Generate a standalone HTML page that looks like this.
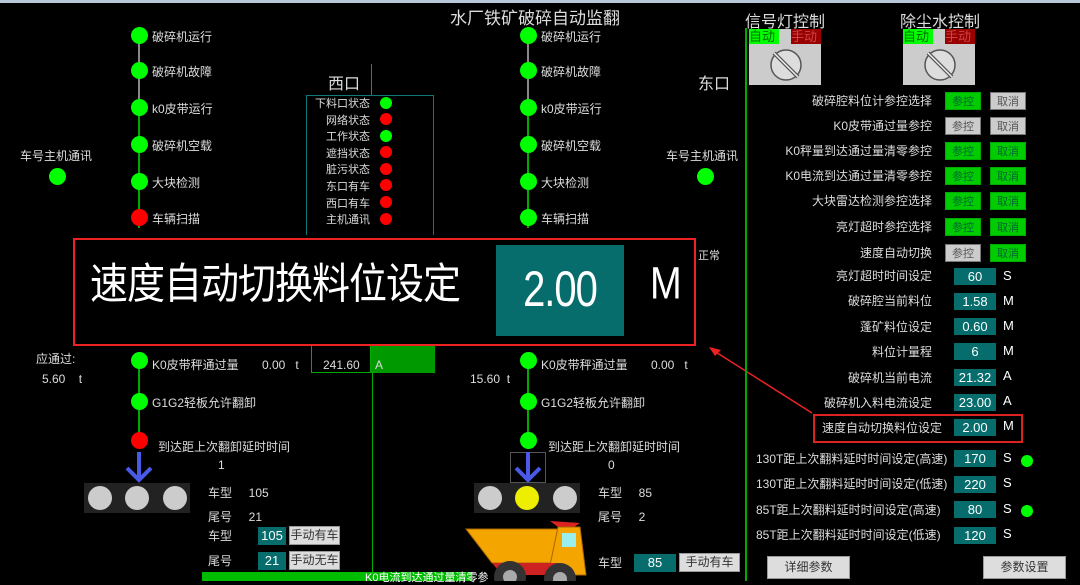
<!DOCTYPE html>
<html><head><meta charset="utf-8"><style>
*{margin:0;padding:0;box-sizing:border-box}
body{width:1080px;height:581px;background:#000;position:relative;overflow:hidden;font-family:"Liberation Sans","Noto Sans CJK SC",sans-serif;color:#ddd}
.a{position:absolute;white-space:nowrap}
.t{font-size:12px;line-height:14px;color:#ddd}
.c{position:absolute;width:17px;height:17px;border-radius:50%;background:#0f0}
.r{background:#f00}
.d{position:absolute;width:12px;height:12px;border-radius:50%}
.btn{position:absolute;width:36px;height:18px;font-size:11px;line-height:18px;text-align:center;border:1px solid #777;color:#333}
.g{background:#0c0;color:#063;border-color:#0a0}
.gy{background:#ccc;color:#555}
.lb{position:absolute;right:148px;font-size:12px;line-height:14px;color:#ddd;text-align:right}
.v{position:absolute;background:#066c6c;color:#fff;font-size:13px;text-align:center;line-height:17px;height:17px}
.u{position:absolute;font-size:13px;color:#fff}
.wb{position:absolute;background:#ddd;color:#333;font-size:12px;text-align:center;border:1px solid #999}
</style></head><body>
<div class="a" style="left:0;top:0;width:1080px;height:3px;background:#b8c8d8"></div>
<div class="a" style="left:450px;top:4px;font-size:17px;color:#ddd">水厂铁矿破碎自动监翻</div>

<!-- left chain -->
<div class="a" style="left:138px;top:36px;width:2px;height:72px;background:#888"></div>
<div class="a" style="left:138px;top:108px;width:2px;height:120px;background:#0a0"></div>
<div class="c" style="left:131px;top:27px"></div><div class="a t" style="left:152px;top:30px">破碎机运行</div>
<div class="c" style="left:131px;top:62px"></div><div class="a t" style="left:152px;top:65px">破碎机故障</div>
<div class="c" style="left:131px;top:99px"></div><div class="a t" style="left:152px;top:102px">k0皮带运行</div>
<div class="c" style="left:131px;top:136px"></div><div class="a t" style="left:152px;top:139px">破碎机空载</div>
<div class="c" style="left:131px;top:173px"></div><div class="a t" style="left:152px;top:176px">大块检测</div>
<div class="c r" style="left:131px;top:209px"></div><div class="a t" style="left:152px;top:212px">车辆扫描</div>
<div class="a t" style="left:20px;top:149px">车号主机通讯</div>
<div class="c" style="left:49px;top:168px"></div>

<!-- 西口 -->
<div class="a" style="left:328px;top:70px;font-size:16px;color:#ddd">西口</div>
<div class="a" style="left:371px;top:64px;width:1px;height:32px;background:#0a0"></div>
<div class="a" style="left:306px;top:95px;width:128px;height:140px;border:1px solid #177;border-bottom:none"></div>
<div class="a" style="left:300px;top:96px;width:70px;font-size:11px;line-height:16.6px;text-align:right;color:#ddd">下料口状态<br>网络状态<br>工作状态<br>遮挡状态<br>脏污状态<br>东口有车<br>西口有车<br>主机通讯</div>
<div class="d" style="left:380px;top:97px;background:#0f0"></div>
<div class="d" style="left:380px;top:113px;background:#f00"></div>
<div class="d" style="left:380px;top:130px;background:#0f0"></div>
<div class="d" style="left:380px;top:146px;background:#f00"></div>
<div class="d" style="left:380px;top:163px;background:#f00"></div>
<div class="d" style="left:380px;top:179px;background:#f00"></div>
<div class="d" style="left:380px;top:196px;background:#f00"></div>
<div class="d" style="left:380px;top:213px;background:#f00"></div>

<!-- center chain -->
<div class="a" style="left:527px;top:36px;width:2px;height:72px;background:#888"></div>
<div class="a" style="left:527px;top:108px;width:2px;height:120px;background:#0a0"></div>
<div class="c" style="left:520px;top:27px"></div><div class="a t" style="left:541px;top:30px">破碎机运行</div>
<div class="c" style="left:520px;top:62px"></div><div class="a t" style="left:541px;top:65px">破碎机故障</div>
<div class="c" style="left:520px;top:99px"></div><div class="a t" style="left:541px;top:102px">k0皮带运行</div>
<div class="c" style="left:520px;top:136px"></div><div class="a t" style="left:541px;top:139px">破碎机空载</div>
<div class="c" style="left:520px;top:173px"></div><div class="a t" style="left:541px;top:176px">大块检测</div>
<div class="c" style="left:520px;top:209px"></div><div class="a t" style="left:541px;top:212px">车辆扫描</div>
<div class="a" style="left:698px;top:70px;font-size:16px;color:#ddd">东口</div>
<div class="a t" style="left:666px;top:149px">车号主机通讯</div>
<div class="c" style="left:697px;top:168px"></div>
<div class="a t" style="left:698px;top:249px;font-size:11px">正常</div>

<!-- lower left -->
<div class="a t" style="left:36px;top:352px">应通过:</div>
<div class="a t" style="left:42px;top:372px">5.60 &nbsp;&nbsp;&nbsp;t</div>
<div class="a" style="left:138px;top:360px;width:2px;height:82px;background:#0a0"></div>
<div class="c" style="left:131px;top:352px"></div><div class="a t" style="left:152px;top:358px">K0皮带秤通过量</div>
<div class="a t" style="left:262px;top:358px">0.00 &nbsp;&nbsp;t</div>
<div class="a" style="left:311px;top:345px;width:60px;height:28px;border:1px solid #0a0;border-top:none"></div>
<div class="a t" style="left:323px;top:358px">241.60</div>
<div class="a" style="left:371px;top:345px;width:64px;height:28px;background:#090"></div>
<div class="a t" style="left:375px;top:358px">A</div>
<div class="a" style="left:372px;top:373px;width:1px;height:200px;background:#0a0"></div>
<div class="c" style="left:131px;top:393px"></div><div class="a t" style="left:152px;top:396px">G1G2轻板允许翻卸</div>
<div class="c r" style="left:131px;top:432px"></div><div class="a t" style="left:158px;top:440px">到达距上次翻卸延时时间</div>
<div class="a t" style="left:218px;top:458px">1</div>
<svg class="a" style="left:122px;top:452px" width="34" height="32"><path d="M17 0V26M5 16L17 28L29 16" stroke="#4a5ae8" stroke-width="4" fill="none"/></svg>
<div class="a" style="left:84px;top:483px;width:106px;height:30px;background:#222"></div>
<div class="a" style="left:88px;top:486px;width:24px;height:24px;border-radius:50%;background:#ccc"></div>
<div class="a" style="left:125px;top:486px;width:24px;height:24px;border-radius:50%;background:#ccc"></div>
<div class="a" style="left:163px;top:486px;width:24px;height:24px;border-radius:50%;background:#ccc"></div>
<div class="a t" style="left:208px;top:486px">车型 &nbsp;&nbsp;&nbsp;&nbsp;105</div>
<div class="a t" style="left:208px;top:510px">尾号 &nbsp;&nbsp;&nbsp;&nbsp;21</div>
<div class="a t" style="left:208px;top:529px">车型</div><div class="v" style="left:258px;top:527px;width:28px;height:18px">105</div>
<div class="wb" style="left:289px;top:526px;width:51px;height:19px;line-height:17px">手动有车</div>
<div class="a t" style="left:208px;top:554px">尾号</div><div class="v" style="left:258px;top:552px;width:28px;height:18px">21</div>
<div class="wb" style="left:289px;top:551px;width:51px;height:19px;line-height:17px">手动无车</div>
<div class="a" style="left:202px;top:572px;width:270px;height:9px;background:#0b0"></div>
<div class="a t" style="left:365px;top:571px;font-size:11px;color:#fff">K0电流到达通过量清零参</div>

<!-- lower center -->
<div class="a t" style="left:470px;top:372px">15.60 &nbsp;t</div>
<div class="a" style="left:527px;top:360px;width:2px;height:82px;background:#0a0"></div>
<div class="c" style="left:520px;top:352px"></div><div class="a t" style="left:541px;top:358px">K0皮带秤通过量</div>
<div class="a t" style="left:651px;top:358px">0.00 &nbsp;&nbsp;t</div>
<div class="c" style="left:520px;top:393px"></div><div class="a t" style="left:541px;top:396px">G1G2轻板允许翻卸</div>
<div class="c" style="left:520px;top:432px"></div><div class="a t" style="left:548px;top:440px">到达距上次翻卸延时时间</div>
<div class="a t" style="left:608px;top:458px">0</div>
<div class="a" style="left:510px;top:452px;width:36px;height:31px;border:1px solid #555"></div>
<svg class="a" style="left:511px;top:452px" width="34" height="32"><path d="M17 0V26M5 16L17 28L29 16" stroke="#4a5ae8" stroke-width="4" fill="none"/></svg>
<div class="a" style="left:474px;top:483px;width:106px;height:30px;background:#222"></div>
<div class="a" style="left:478px;top:486px;width:24px;height:24px;border-radius:50%;background:#ccc"></div>
<div class="a" style="left:515px;top:486px;width:24px;height:24px;border-radius:50%;background:#ee0"></div>
<div class="a" style="left:553px;top:486px;width:24px;height:24px;border-radius:50%;background:#ccc"></div>
<div class="a t" style="left:598px;top:486px">车型 &nbsp;&nbsp;&nbsp;&nbsp;85</div>
<div class="a t" style="left:598px;top:510px">尾号 &nbsp;&nbsp;&nbsp;&nbsp;2</div>
<div class="a t" style="left:598px;top:556px">车型</div><div class="v" style="left:634px;top:554px;width:42px;height:18px">85</div>
<div class="wb" style="left:679px;top:553px;width:61px;height:19px;line-height:17px">手动有车</div>
<svg class="a" style="left:462px;top:515px" width="140" height="66">
<path d="M4 14L100 14L94 48L30 48Z" fill="#f5a500" stroke="#a60" stroke-width="1"/>
<path d="M88 6L118 8L112 12L96 12Z" fill="#d22"/>
<path d="M96 12L118 12L124 60L86 60Z" fill="#f5a500" stroke="#a60"/>
<rect x="100" y="18" width="14" height="14" fill="#9ee"/>
<path d="M30 48L96 48L90 60L40 60Z" fill="#c22"/>
<circle cx="48" cy="62" r="16" fill="#333"/><circle cx="48" cy="62" r="7" fill="#aaa"/>
<circle cx="98" cy="64" r="16" fill="#333"/><circle cx="98" cy="64" r="7" fill="#aaa"/>
</svg>

<!-- popup -->
<div class="a" style="left:73px;top:238px;width:623px;height:108px;border:2px solid #e22;background:#000"></div>
<div class="a" style="left:90px;top:262px;font-size:38px;line-height:46px;color:#fff;transform:scaleY(1.12);letter-spacing:-1px">速度自动切换料位设定</div>
<div class="a" style="left:496px;top:245px;width:128px;height:91px;background:#066c6c"></div>
<div class="a" style="left:496px;top:245px;width:128px;height:91px;color:#fff;font-size:40px;text-align:center;line-height:91px;transform:scaleY(1.25);letter-spacing:-1px">2.00</div>
<div class="a" style="left:650px;top:263px;font-size:38px;color:#fff;transform:scaleY(1.2)">M</div>
<svg class="a" style="left:705px;top:343px" width="110" height="72"><path d="M107 70L6 6" stroke="#e22" stroke-width="1.5"/><path d="M4 4L16 7L10 13Z" fill="#e22"/></svg>

<!-- right panel -->
<div class="a" style="left:745px;top:28px;width:2px;height:553px;background:#0a0"></div>
<div class="a" style="left:745px;top:8px;font-size:16px;color:#ddd">信号灯控制</div>
<div class="a" style="left:900px;top:8px;font-size:16px;color:#ddd">除尘水控制</div>
<div class="a" style="left:749px;top:29px;width:72px;height:56px;background:#ccc"></div>
<div class="a" style="left:749px;top:29px;width:30px;height:15px;background:#0f0;color:#060;font-size:13px;line-height:15px">自动</div>
<div class="a" style="left:791px;top:29px;width:30px;height:15px;background:#900;color:#c44;font-size:13px;line-height:15px">手动</div>
<svg class="a" style="left:766px;top:45px" width="40" height="38"><circle cx="20" cy="20" r="15" fill="#ddd" stroke="#555" stroke-width="1.5"/><path d="M8 8L32 32" stroke="#555" stroke-width="4"/><path d="M8 8L32 32" stroke="#eee" stroke-width="1.5"/></svg>
<div class="a" style="left:903px;top:29px;width:72px;height:56px;background:#ccc"></div>
<div class="a" style="left:903px;top:29px;width:30px;height:15px;background:#0f0;color:#060;font-size:13px;line-height:15px">自动</div>
<div class="a" style="left:945px;top:29px;width:30px;height:15px;background:#900;color:#c44;font-size:13px;line-height:15px">手动</div>
<svg class="a" style="left:920px;top:45px" width="40" height="38"><circle cx="20" cy="20" r="15" fill="#ddd" stroke="#555" stroke-width="1.5"/><path d="M8 8L32 32" stroke="#555" stroke-width="4"/><path d="M8 8L32 32" stroke="#eee" stroke-width="1.5"/></svg>

<div class="lb" style="top:94px">破碎腔料位计参控选择</div><div class="btn g" style="left:945px;top:92px">参控</div><div class="btn gy" style="left:990px;top:92px">取消</div>
<div class="lb" style="top:119px">K0皮带通过量参控</div><div class="btn gy" style="left:945px;top:117px">参控</div><div class="btn gy" style="left:990px;top:117px">取消</div>
<div class="lb" style="top:144px">K0秤量到达通过量清零参控</div><div class="btn g" style="left:945px;top:142px">参控</div><div class="btn g" style="left:990px;top:142px">取消</div>
<div class="lb" style="top:169px">K0电流到达通过量清零参控</div><div class="btn g" style="left:945px;top:167px">参控</div><div class="btn g" style="left:990px;top:167px">取消</div>
<div class="lb" style="top:194px">大块雷达检测参控选择</div><div class="btn g" style="left:945px;top:192px">参控</div><div class="btn g" style="left:990px;top:192px">取消</div>
<div class="lb" style="top:220px">亮灯超时参控选择</div><div class="btn g" style="left:945px;top:218px">参控</div><div class="btn g" style="left:990px;top:218px">取消</div>
<div class="lb" style="top:246px">速度自动切换</div><div class="btn gy" style="left:945px;top:244px">参控</div><div class="btn g" style="left:990px;top:244px">取消</div>

<div class="lb" style="top:269px">亮灯超时时间设定</div><div class="v" style="left:954px;top:268px;width:42px">60</div><div class="u" style="left:1003px;top:268px">S</div>
<div class="lb" style="top:294px">破碎腔当前料位</div><div class="v" style="left:954px;top:293px;width:42px">1.58</div><div class="u" style="left:1003px;top:293px">M</div>
<div class="lb" style="top:320px">蓬矿料位设定</div><div class="v" style="left:954px;top:318px;width:42px">0.60</div><div class="u" style="left:1003px;top:318px">M</div>
<div class="lb" style="top:345px">料位计量程</div><div class="v" style="left:954px;top:343px;width:42px">6</div><div class="u" style="left:1003px;top:343px">M</div>
<div class="lb" style="top:371px">破碎机当前电流</div><div class="v" style="left:954px;top:369px;width:42px">21.32</div><div class="u" style="left:1003px;top:368px">A</div>
<div class="lb" style="top:396px">破碎机入料电流设定</div><div class="v" style="left:954px;top:394px;width:42px">23.00</div><div class="u" style="left:1003px;top:393px">A</div>
<div class="a" style="left:813px;top:414px;width:210px;height:29px;border:2px solid #d22"></div>
<div class="lb" style="top:421px;right:138px">速度自动切换料位设定</div><div class="v" style="left:954px;top:419px;width:42px">2.00</div><div class="u" style="left:1003px;top:418px">M</div>

<div class="a t" style="left:756px;top:452px">130T距上次翻料延时时间设定(高速)</div><div class="v" style="left:954px;top:450px;width:42px">170</div><div class="u" style="left:1003px;top:450px">S</div><div class="d" style="left:1021px;top:455px;background:#0f0"></div>
<div class="a t" style="left:756px;top:477px">130T距上次翻料延时时间设定(低速)</div><div class="v" style="left:954px;top:476px;width:42px">220</div><div class="u" style="left:1003px;top:475px">S</div>
<div class="a t" style="left:756px;top:503px">85T距上次翻料延时时间设定(高速)</div><div class="v" style="left:954px;top:501px;width:42px">80</div><div class="u" style="left:1003px;top:501px">S</div><div class="d" style="left:1021px;top:505px;background:#0f0"></div>
<div class="a t" style="left:756px;top:528px">85T距上次翻料延时时间设定(低速)</div><div class="v" style="left:954px;top:527px;width:42px">120</div><div class="u" style="left:1003px;top:526px">S</div>
<div class="wb" style="left:767px;top:556px;width:83px;height:23px;line-height:21px">详细参数</div>
<div class="wb" style="left:983px;top:556px;width:83px;height:23px;line-height:21px">参数设置</div>
</body></html>
